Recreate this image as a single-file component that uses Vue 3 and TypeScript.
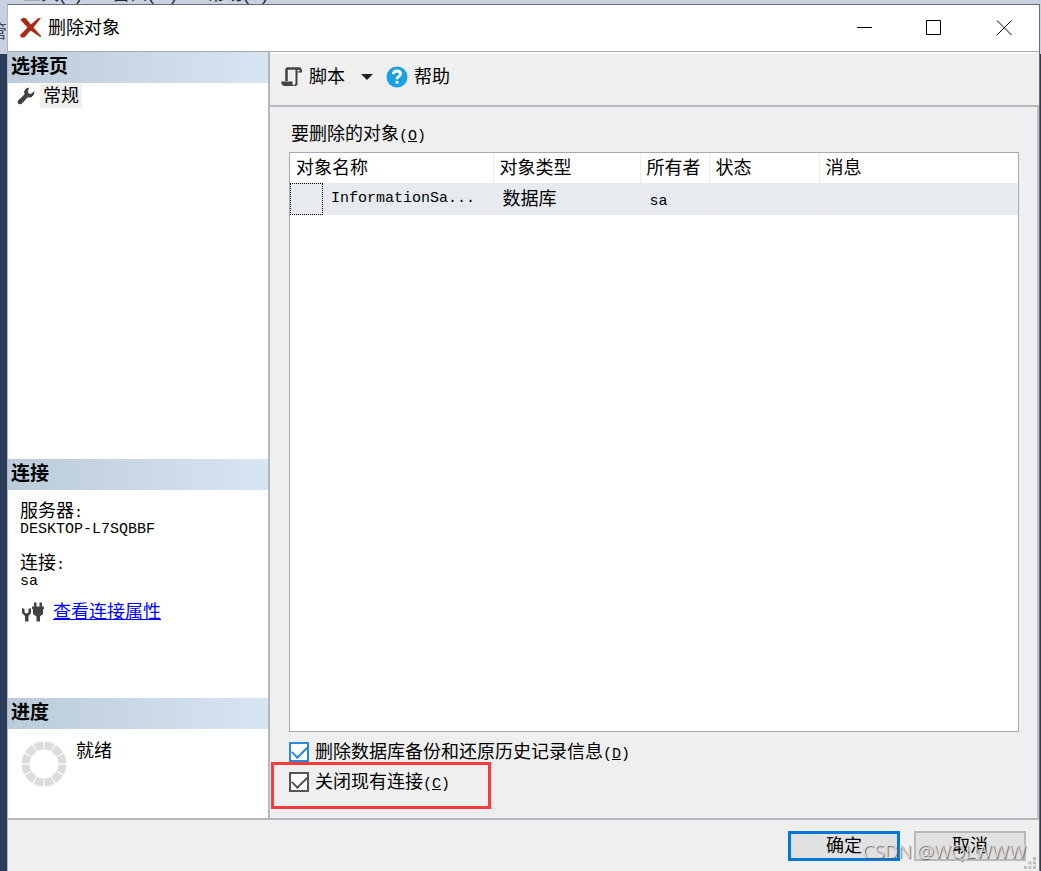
<script setup lang="ts">
import { ref } from 'vue'

interface DeleteTarget {
  name: string
  type: string
  owner: string
  state: string
  message: string
}

const columns: string[] = ['对象名称', '对象类型', '所有者', '状态', '消息']
const targets: DeleteTarget[] = [
  { name: 'InformationSa...', type: '数据库', owner: 'sa', state: '', message: '' },
]
const deleteHistory = ref<boolean>(true)
const closeConnections = ref<boolean>(true)
</script>

<template>
  <div class="desktop">
    <div class="host-menu" aria-hidden="true">
      <span>工具(T)</span><span>窗口(W)</span><span>帮助(H)</span>
    </div>
    <div class="host-side" aria-hidden="true">管</div>

    <section class="window">
      <header class="titlebar">
        <svg class="logo" width="22" height="22" viewBox="0 0 22 22">
          <path d="M.5 3 2.500 1H5.500L11 7.500 18 1.200 21 1 13.500 10.500 21.500 19.500 20 20 10.500 13.500 4.500 20.500 1 20.500 0 18 7.500 10.500Z" fill="#a82c14" />
        </svg>
        <h1>删除对象</h1>
        <div class="caption-buttons">
          <button type="button" aria-label="最小化">
            <svg width="16" height="16" viewBox="0 0 16 16"><path d="M1 7.500H16" /></svg>
          </button>
          <button type="button" aria-label="最大化">
            <svg width="16" height="16" viewBox="0 0 16 16"><path d="M.5.5H14.500V14.500H.5Z" /></svg>
          </button>
          <button type="button" aria-label="关闭">
            <svg width="16" height="16" viewBox="0 0 16 16"><path d="M1 .5 15.500 15M15.500 .5 1 15" /></svg>
          </button>
        </div>
      </header>

      <div class="body">
        <aside class="sidebar">
          <section class="pages">
            <h2>选择页</h2>
            <button type="button" class="page-item">
              <svg width="18" height="18" viewBox="0 0 18 18">
                <path d="M12.500.5 9 1.500 7 4.500 7.500 7.500.8 13.800.8 16.200 2.200 17.300 4.500 17 10.500 10.500 14 10.500 17 7.500 17.300 4 14 7 11.300 6.300 11 3.500Z" fill="#424242" />
              </svg>
              <span>常规</span>
            </button>
          </section>

          <section class="connection">
            <h2>连接</h2>
            <dl>
              <dt>服务器<span class="mono">:</span></dt>
              <dd class="mono">DESKTOP-L7SQBBF</dd>
              <dt>连接<span class="mono">:</span></dt>
              <dd class="mono">sa</dd>
            </dl>
            <div class="properties">
              <svg width="22" height="20" viewBox="0 0 22 20" fill="#424242">
                <path d="M0 6 2.500 7V10.500L4.500 11.500 6.500 10.500V7L9 6V11L6.500 14V19.500H3V14L0 11Z" />
                <path d="M12 .5H14.500V4.500H17.500V.5H20V4.500H22V7H21V12L18 14.500V19.500H14.500V14.500L11 12V7H10V4.500H12Z" />
              </svg>
              <a href="#">查看连接属性</a>
            </div>
          </section>

          <section class="progress">
            <h2>进度</h2>
            <div class="status">
              <svg width="46" height="46" viewBox="0 0 46 46">
                <circle cx="23" cy="23" r="18.500" fill="none" stroke="#dcdcdc" stroke-width="8" pathLength="120" stroke-dasharray="8.800 1.200" stroke-dashoffset="-0.600" />
              </svg>
              <span>就绪</span>
            </div>
          </section>
        </aside>

        <main>
          <div class="toolbar">
            <button type="button" class="tool script">
              <svg width="22" height="20" viewBox="0 0 22 20" fill="none" stroke="#424242">
                <path d="M5.500 14V3Q5.500 1.500 7 1.500H18Q19.800 1.500 19.800 5" stroke-width="2.500" />
                <path d="M15.500 2V16.500Q15.500 18.200 13.500 18.200" stroke-width="2" />
                <path d="M0 14.500H11.500Q11 18.500 14 19H4Q.5 19 0 14.500Z" fill="#424242" stroke="none" />
                <path d="M16.500 5H21" stroke-width="1" />
              </svg>
              <span>脚本</span>
              <svg class="arrow" width="12" height="6" viewBox="0 0 12 6"><path d="M0 0H12L6 6Z" fill="#222" /></svg>
            </button>
            <button type="button" class="tool">
              <svg width="22" height="22" viewBox="0 0 22 22">
                <circle cx="11" cy="11" r="10.500" fill="#1ba1e2" />
                <path d="M7.300 8.200Q7.500 5 11 5 14.500 5 14.500 8 14.500 9.800 12.500 10.800 11 11.600 11 13.300" fill="none" stroke="#fff" stroke-width="2.800" />
                <path d="M9.600 15H12.400V17.600H9.600Z" fill="#fff" />
              </svg>
              <span>帮助</span>
            </button>
          </div>

          <div class="content">
            <h3 id="targets-label">要删除的对象<span class="mono">(<u>O</u>)</span></h3>
            <div class="grid">
              <table aria-labelledby="targets-label">
                <colgroup>
                  <col class="c-name" /><col class="c-type" /><col class="c-owner" /><col class="c-state" /><col />
                </colgroup>
                <thead>
                  <tr><th v-for="column in columns" :key="column" scope="col">{{ column }}</th></tr>
                </thead>
                <tbody>
                  <tr v-for="target in targets" :key="target.name">
                    <td class="name"><div><i class="cell-focus"></i><span class="mono">{{ target.name }}</span></div></td>
                    <td>{{ target.type }}</td>
                    <td><span class="mono">{{ target.owner }}</span></td>
                    <td>{{ target.state }}</td>
                    <td>{{ target.message }}</td>
                  </tr>
                </tbody>
              </table>
            </div>
            <div class="options">
              <label class="option focused">
                <input v-model="deleteHistory" type="checkbox" />
                <span>删除数据库备份和还原历史记录信息<span class="mono">(<u>D</u>)</span></span>
              </label>
              <label class="option marked">
                <input v-model="closeConnections" type="checkbox" />
                <span>关闭现有连接<span class="mono">(<u>C</u>)</span></span>
              </label>
            </div>
          </div>
        </main>
      </div>

      <footer>
        <button type="button" class="action primary">确定</button>
        <button type="button" class="action">取消</button>
        <svg class="grip" width="12" height="12" viewBox="0 0 12 12" fill="#bdbdbd">
          <path d="M9 0h3v3H9zM4.500 4.500h3v3h-3zM9 4.500h3v3H9zM0 9h3v3H0zM4.500 9h3v3h-3zM9 9h3v3H9z" />
        </svg>
        <span class="watermark">CSDN @WQLWWW</span>
      </footer>
    </section>
  </div>
</template>

<style>
body {
  margin: 0;
}
</style>

<style scoped>
* {
  box-sizing: border-box;
}

.desktop {
  position: relative;
  display: flex;
  min-height: 100vh;
  padding: 4px 1px 0 7px;
  overflow: hidden;
  background: linear-gradient(#c9d0e0 54px, #2b3c5a 54px);
  color: #000;
  font: 18px/20px "Liberation Sans", "Noto Sans CJK SC", sans-serif;
}

.host-menu {
  position: absolute;
  top: 0;
  left: 23px;
  display: flex;
  align-items: flex-end;
  gap: 30px;
  height: 4px;
  overflow: hidden;
  color: #252a36;
}

.host-side {
  position: absolute;
  top: 22px;
  left: 0;
  width: 7px;
  overflow: hidden;
  direction: rtl;
  color: #454b59;
}

.window {
  position: relative;
  display: flex;
  flex: 1;
  flex-direction: column;
  border: 1px solid #686b78;
  border-bottom: 0;
  border-left-color: #b4b6c0;
  background: #efefef;
}

button {
  margin: 0;
  padding: 0;
  border: 0;
  background: none;
  color: inherit;
  font: inherit;
}

h1,
h2,
h3,
dl,
dd {
  margin: 0;
  font-size: 18px;
  font-weight: 400;
}

svg {
  flex: none;
}

.mono {
  font-family: "Liberation Mono", "Noto Sans CJK SC", monospace;
  font-size: 15px;
  line-height: 16px;
}

.titlebar {
  display: flex;
  align-items: center;
  height: 47px;
  padding-left: 12px;
  border-bottom: 1px solid #aaa;
  background: #fff;
}

.titlebar h1 {
  flex: 1;
  margin-left: 6px;
}

.caption-buttons {
  display: flex;
}

.caption-buttons button {
  display: grid;
  place-items: center;
  width: 70px;
  height: 46px;
}

.caption-buttons path {
  fill: none;
  stroke: #000;
}

.body {
  display: flex;
  flex: 1;
  border-bottom: 2px solid #b7b7be;
}

.sidebar {
  display: flex;
  flex: none;
  flex-direction: column;
  width: 262px;
  border-right: 2px solid #b7b7be;
  background: #fff;
}

.sidebar h2 {
  height: 31px;
  padding-left: 3px;
  background: linear-gradient(90deg, #bccbd9, #d8e6f3);
  font-size: 19px;
  font-weight: 700;
  line-height: 29px;
}

.pages {
  flex: 1;
}

.page-item {
  display: flex;
  align-items: center;
  gap: 5px;
  padding: 1px 0 0 9px;
}

.page-item span {
  padding: 2px 3px;
  background: #efefef;
}

.connection {
  height: 239px;
}

dl {
  padding: 12px 12px 0;
}

dt {
  line-height: 18px;
}

dd {
  line-height: 16px;
}

.connection .mono {
  font-size: 15px;
}

dd + dt {
  margin-top: 16px;
}

.properties {
  display: flex;
  align-items: center;
  gap: 9px;
  padding: 12px 14px 0;
}

a {
  color: #00f;
}

.progress {
  height: 120px;
}

.status {
  display: flex;
  align-items: flex-start;
  gap: 9px;
  padding: 12px 13px;
}

main {
  display: flex;
  flex: 1;
  flex-direction: column;
  min-width: 0;
  border-top: 2px solid #fafafa;
}

.toolbar {
  display: flex;
  align-items: center;
  gap: 13px;
  height: 53px;
  padding: 0 12px 5px 11px;
  border-bottom: 2px solid #b7b7be;
}

.tool {
  display: flex;
  align-items: center;
  gap: 6px;
}

.arrow {
  margin-left: 10px;
}

.content {
  display: flex;
  flex: 1;
  flex-direction: column;
  padding: 17px 18px 6px 19px;
  border-right: 2px solid #c2c2c8;
}

h3 {
  padding-left: 2px;
}

.grid {
  flex: 1;
  margin-top: 7px;
  border: 1px solid #a9a9b2;
  background: #fff;
}

table {
  width: 100%;
  border-collapse: collapse;
  table-layout: fixed;
}

.c-name {
  width: 203px;
}

.c-type {
  width: 147px;
}

.c-owner {
  width: 69px;
}

.c-state {
  width: 110px;
}

th,
td {
  overflow: hidden;
  border-right: 1px solid #ececec;
  text-align: left;
  white-space: nowrap;
}

th:last-child,
td:last-child {
  border-right: 0;
}

th {
  height: 30px;
  padding: 0 0 0 6px;
  font-weight: 400;
}

td {
  height: 32px;
  padding: 0 0 0 9px;
  background: #e7ebf0;
}

td.name {
  padding: 0;
}

.name div {
  display: flex;
  align-items: center;
  gap: 8px;
}

.cell-focus {
  width: 33px;
  height: 32px;
  border: 1px dotted #000;
}

.options {
  padding-top: 10px;
}

.option {
  position: relative;
  display: flex;
  align-items: center;
  gap: 6px;
  width: max-content;
  height: 20px;
  margin-bottom: 10px;
}

.option.marked {
  margin-bottom: 20px;
}

.option.marked::after {
  position: absolute;
  inset: -10px -41px -17px -18px;
  border: 3px solid #fb3a3a;
  content: "";
}

input {
  display: grid;
  width: 20px;
  height: 20px;
  margin: 0;
  border: 2px solid #555;
  appearance: none;
  background: #fff;
  color: #555;
}

.focused input {
  border-color: #2b88d8;
  color: #2b88d8;
}

input:checked::before {
  place-self: center;
  width: 13px;
  height: 7px;
  margin-bottom: 3px;
  border: solid currentColor;
  border-width: 0 0 2px 2px;
  transform: rotate(-45deg);
  content: "";
}

footer {
  position: relative;
  display: flex;
  justify-content: flex-end;
  gap: 14px;
  height: 51px;
  padding: 11px 13px 0;
}

.action {
  width: 112px;
  height: 30px;
  border: 2px solid #b9b9b9;
  background: #e1e1e1;
}

.action.primary {
  border: 3px solid #0078d7;
}

.grip {
  position: absolute;
  right: 3px;
  bottom: 2px;
}

.watermark {
  position: absolute;
  right: 13px;
  bottom: 10px;
  color: #dedede;
  font-family: "Noto Sans", sans-serif;
  font-size: 19px;
  font-weight: 300;
  text-shadow: 1px 1px 1px #555;
}
</style>
